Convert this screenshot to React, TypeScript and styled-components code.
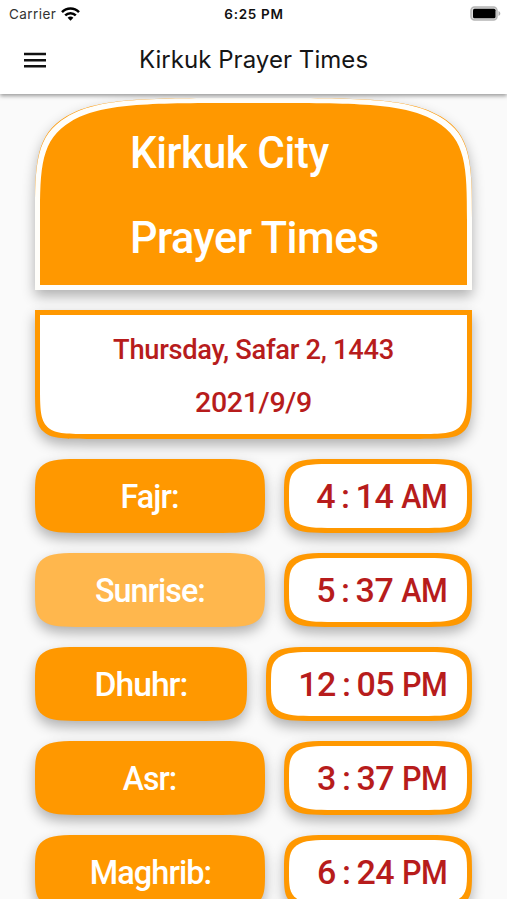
import React from 'react';
import styled, { createGlobalStyle } from 'styled-components';

const ORANGE = '#ff9800';
const RED = '#b71c1c';

const GlobalStyle = createGlobalStyle`
  * { box-sizing: border-box; }
  body { margin: 0; background: #fff; overflow: hidden; }
`;

const Screen = styled.div`
  width: 507px;
  height: 899px;
  overflow: hidden;
  display: flex;
  flex-direction: column;
  background: #fafafa;
  font-family: Roboto, 'Noto Sans', sans-serif;
`;

const Header = styled.header`
  flex: none;
  height: 94px;
  background: #fff;
  box-shadow: 0 2px 4px rgba(0, 0, 0, 0.38);
  z-index: 1;
  font-family: Inter, sans-serif;
`;

const StatusBar = styled.div`
  display: grid;
  grid-template-columns: 1fr auto 1fr;
  align-items: center;
  height: 27px;
  padding: 0 6px 0 9px;
  font-size: 13.5px;
  color: #111;
`;

const Carrier = styled.div`
  display: flex;
  align-items: center;
  gap: 5px;
  letter-spacing: 0.45px;
  color: #333;
`;

const Clock = styled.div`
  font-weight: 600;
  letter-spacing: 0.7px;
  margin-right: 2px;
`;

const Battery = styled.svg`
  justify-self: end;
`;

const Toolbar = styled.div`
  display: grid;
  grid-template-columns: 70px 1fr 70px;
  align-items: center;
  height: 65px;
`;

const MenuButton = styled.button`
  width: 24px;
  height: 24px;
  margin-left: 23px;
  padding: 0;
  border: 0;
  background: none;
`;

const Title = styled.h1`
  margin: 0;
  text-align: center;
  font-size: 24px;
  font-weight: 400;
  letter-spacing: 0.05px;
  color: #151515;
  white-space: nowrap;
`;

const Content = styled.main`
  display: flex;
  flex-direction: column;
  gap: 20px;
  padding: 4px 35px 0 35px;
`;

const SHADOW = '0 6px 13px rgba(0, 0, 0, 0.3)';

const CityCard = styled.section`
  flex: none;
  display: flex;
  height: 192px;
  background: ${ORANGE};
  border-radius: 218px 218px 0 0 / 130px 130px 0 0;
  corner-shape: superellipse(2.17);
  box-shadow: ${SHADOW};
`;

const CityFrame = styled.div`
  flex: 1;
  display: flex;
  padding: 5px;
  background: #fffefa;
  border-radius: 218px 218px 0 0 / 130px 130px 0 0;
  corner-shape: superellipse(2.14);
`;

const CityFace = styled.div`
  flex: 1;
  padding: 7px 0 0 90px;
  background: ${ORANGE};
  border-radius: 213px 213px 0 0 / 127px 127px 0 0;
  corner-shape: superellipse(2.14);
`;

const CityLine = styled.div<{ $scale: number }>`
  height: 85px;
  line-height: 85px;
  font-size: 45px;
  font-weight: 500;
  letter-spacing: -0.5px;
  color: #fff;
  white-space: nowrap;
  transform: scaleX(${(p) => p.$scale});
  transform-origin: left;
`;

const DateCard = styled.section`
  flex: none;
  display: flex;
  height: 129px;
  padding: 5px;
  background: ${ORANGE};
  border-radius: 0 0 60px 60px;
  corner-shape: superellipse(2.3);
  box-shadow: ${SHADOW};
`;

const DateFace = styled.div`
  flex: 1;
  padding-top: 8px;
  background: #fff;
  border-radius: 0 0 55px 55px;
  corner-shape: superellipse(2.3);
`;

const DateLine = styled.div<{ $scale: number }>`
  height: 52.5px;
  line-height: 53px;
  text-align: center;
  font-size: 28.5px;
  font-weight: 500;
  letter-spacing: -0.3px;
  color: ${RED};
  white-space: nowrap;
  transform: scaleX(${(p) => p.$scale});
`;

const PrayerRow = styled.div`
  display: flex;
  gap: 19px;
  flex: none;
  height: 74px;
  font-size: 34px;
  font-weight: 500;
  white-space: nowrap;
`;

const Pill = styled.div`
  display: flex;
  border-radius: 50px / 37px;
  corner-shape: superellipse(2);
  box-shadow: ${SHADOW};
`;

const NamePill = styled(Pill)<{ $muted?: boolean }>`
  flex: 1;
  align-items: center;
  justify-content: center;
  background: ${(p) => (p.$muted ? '#ffb74d' : ORANGE)};
`;

const Name = styled.span<{ $scale: number }>`
  color: #fff;
  letter-spacing: -1px;
  transform: scaleX(${(p) => p.$scale});
`;

const TimePill = styled(Pill)<{ $wide?: boolean }>`
  flex: none;
  width: ${(p) => (p.$wide ? 206 : 188)}px;
  padding: 5px;
  background: ${ORANGE};
`;

const TimeFace = styled.div`
  flex: 1;
  display: flex;
  align-items: center;
  justify-content: flex-end;
  padding-right: 20px;
  background: #fff;
  color: ${RED};
  border-radius: 45px / 32px;
  corner-shape: superellipse(1.9);
  letter-spacing: -0.5px;
`;

const Digits = styled.span`
  word-spacing: -1.9px;
  margin-right: 2.5px;
`;

const Meridiem = styled.span`
  transform: scaleX(0.9);
  transform-origin: right;
`;

const prayers = [
  { name: 'Fajr:', time: '4 : 14', half: 'AM', scale: 0.95 },
  { name: 'Sunrise:', time: '5 : 37', half: 'AM', scale: 0.95, muted: true },
  { name: 'Dhuhr:', time: '12 : 05', half: 'PM', scale: 0.99, wide: true },
  { name: 'Asr:', time: '3 : 37', half: 'PM', scale: 0.94 },
  { name: 'Maghrib:', time: '6 : 24', half: 'PM', scale: 0.955 },
];

export default function App() {
  return (
    <>
      <GlobalStyle />
      <Screen>
        <Header>
          <StatusBar>
            <Carrier>
              Carrier
              <svg width="19" height="14" viewBox="0 0 19 14" fill="none" stroke="#000" strokeWidth="2.5">
                <path d="M1 5.1C5.8.2 13.2.2 18 5.1" />
                <path d="M4.2 8.4c3-3 7.6-3 10.6 0" />
                <path d="M9.5 13.8 6.6 10.8c1.6-1.6 4.2-1.6 5.8 0z" fill="#000" stroke="none" />
              </svg>
            </Carrier>
            <Clock>6:25 PM</Clock>
            <Battery width="31" height="15" viewBox="0 0 31 15">
              <rect x="1" y="1" width="26" height="13" rx="3.5" fill="#ddd" stroke="#b5b5b5" strokeWidth="1.5" />
              <rect x="3" y="2.7" width="22.5" height="9.6" rx="1.5" fill="#000" />
              <path d="M28.5 5v5c1-.4 1.8-1.3 1.8-2.5S29.5 5.4 28.5 5z" fill="#aaa" />
            </Battery>
          </StatusBar>
          <Toolbar>
            <MenuButton aria-label="Menu">
              <svg width="24" height="24" viewBox="0 0 24 24" stroke="#111" strokeWidth="2.5">
                <path d="M1 6H23M1 12.2H23M1 18.3H23" />
              </svg>
            </MenuButton>
            <Title>Kirkuk Prayer Times</Title>
          </Toolbar>
        </Header>
        <Content>
          <CityCard>
            <CityFrame>
              <CityFace>
                <CityLine $scale={0.94}>Kirkuk City</CityLine>
                <CityLine $scale={0.96}>Prayer Times</CityLine>
              </CityFace>
            </CityFrame>
          </CityCard>
          <DateCard>
            <DateFace>
              <DateLine $scale={0.957}>Thursday, Safar 2, 1443</DateLine>
              <DateLine $scale={1}>2021/9/9</DateLine>
            </DateFace>
          </DateCard>
          {prayers.map((p) => (
            <PrayerRow key={p.name}>
              <NamePill $muted={p.muted}>
                <Name $scale={p.scale}>{p.name}</Name>
              </NamePill>
              <TimePill $wide={p.wide}>
                <TimeFace>
                  <Digits>{p.time}</Digits>{' '}
                  <Meridiem>{p.half}</Meridiem>
                </TimeFace>
              </TimePill>
            </PrayerRow>
          ))}
        </Content>
      </Screen>
    </>
  );
}
